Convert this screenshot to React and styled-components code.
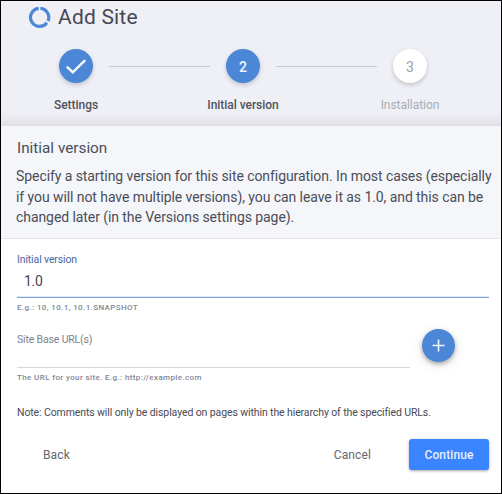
import React from 'react';
import styled, { createGlobalStyle } from 'styled-components';

const GlobalStyle = createGlobalStyle`
  * { box-sizing: border-box; }
  body { margin: 0; background: #fff; font-family: Roboto, "Liberation Sans", sans-serif; }
  button, input { font-family: inherit; border: 0; outline: 0; background: none; padding: 0; margin: 0; }
  p, h1, h2 { margin: 0; font-weight: 400; }
`;

const Dialog = styled.main`
  width: 502px;
  height: 494px;
  border: 1px solid #000;
  background: #fff;
  color: #4b4d59;
  overflow: hidden;
`;

const Header = styled.header`
  height: 125px;
  padding-left: 27px;
  background: linear-gradient(to bottom, #eff0f6 0, #eff0f6 112px, #e9e9ef 118px, #dfdee4 125px);
`;

const TitleRow = styled.div`
  display: flex;
  align-items: center;
  gap: 7px;
  height: 32px;
`;

const Title = styled.h1`
  font-size: 21px;
  line-height: 30px;
  letter-spacing: 0.2px;
  color: #464854;
`;

const Steps = styled.div`
  display: flex;
  align-items: flex-start;
  gap: 16px;
  padding: 16px 0 0 31px;
`;

const Step = styled.div`
  display: flex;
  flex-direction: column;
  align-items: center;
  width: 34px;
`;

const StepCircle = styled.div`
  display: flex;
  align-items: center;
  justify-content: center;
  width: 34px;
  height: 34px;
  border-radius: 50%;
  font-size: 14px;
  font-weight: ${(p) => (p.$active ? 500 : 400)};
  line-height: 18px;
  padding-top: 1px;
  background: ${(p) => (p.$active ? '#4b87d6' : '#fff')};
  color: ${(p) => (p.$active ? '#f3f6fc' : '#98a1ad')};
  box-shadow: 0 2px 4px rgba(60, 60, 80, 0.25);
`;

const StepLabel = styled.span`
  margin-top: 14px;
  font-size: 12px;
  line-height: 16px;
  letter-spacing: -0.04px;
  white-space: nowrap;
  font-weight: ${(p) => (p.$active ? 500 : 400)};
  color: ${(p) => (p.$active ? '#50525c' : '#a7adb8')};
`;

const Connector = styled.div`
  width: 101px;
  height: 1px;
  margin-top: 17px;
  background: #c9cad0;
`;

const Intro = styled.section`
  height: 113px;
  padding: 13px 0 0 15px;
  background: #f4f6fa;
  border-bottom: 1px solid #e4e5e9;
`;

const IntroTitle = styled.h2`
  padding-left: 1px;
  font-size: 15.3px;
  line-height: 18px;
  color: #4b4d59;
`;

const IntroText = styled.p`
  margin-top: 9px;
  font-size: 14px;
  line-height: 20.5px;
  letter-spacing: -0.073px;
  white-space: nowrap;
`;

const Form = styled.section`
  padding: 14px 12px 0 16px;
`;

const Field = styled.label`
  display: block;
  width: ${(p) => p.$width}px;
`;

const FieldLabel = styled.span`
  display: block;
  font-size: 10.5px;
  line-height: 14px;
  letter-spacing: ${(p) => (p.$focused ? '-0.13px' : '-0.16px')};
  color: ${(p) => (p.$focused ? '#4a66a0' : '#7c7f8e')};
`;

const Input = styled.input`
  display: block;
  width: 100%;
  height: ${(p) => p.$height}px;
  padding: 0 7px 2px;
  font-size: 14px;
  letter-spacing: -0.3px;
  color: #42444e;
  border-bottom: 1px solid ${(p) => (p.$focused ? '#7fa2e0' : '#d6d7da')};
  box-shadow: ${(p) => (p.$focused ? 'inset 0 -1px 0 #dfe8f8' : 'none')};
`;

const Hint = styled.span`
  display: block;
  margin-top: 4px;
  font-size: 8px;
  font-weight: 500;
  line-height: 12px;
  letter-spacing: 0.38px;
  white-space: nowrap;
  color: #838694;
`;

const UrlRow = styled.div`
  display: flex;
  gap: 12px;
  margin-top: 19px;
`;

const AddButton = styled.button`
  display: flex;
  align-items: center;
  justify-content: center;
  width: 33px;
  height: 33px;
  margin-top: -4px;
  border-radius: 50%;
  background: #4b87d6;
  box-shadow: 0 2px 4px rgba(0, 0, 0, 0.28), 0 3px 12px rgba(0, 0, 0, 0.12);
`;

const Note = styled.p`
  margin-top: 22px;
  font-size: 10.5px;
  line-height: 14px;
  letter-spacing: -0.108px;
  white-space: nowrap;
  color: #484a54;
`;

const Actions = styled.footer`
  display: flex;
  align-items: center;
  margin-top: 19px;
  padding-left: 26px;
`;

const TextButton = styled.button`
  font-size: 12px;
  line-height: 16px;
  letter-spacing: 0.12px;
  color: #65676e;
`;

const CancelButton = styled(TextButton)`
  margin-left: auto;
  margin-right: 38px;
`;

const PrimaryButton = styled.button`
  width: 80px;
  height: 31px;
  border-radius: 3px;
  font-size: 12px;
  font-weight: 500;
  letter-spacing: 0.1px;
  color: #e6effd;
  background: #3a84ff;
  box-shadow: 0 1px 3px rgba(0, 0, 0, 0.35);
`;

function Logo() {
  return (
    <svg width="23" height="23" viewBox="0 0 23 23" fill="none" stroke="#4b87d6" strokeWidth="3.2">
      <path d="M12.4 2.3A9.1 9.1 0 0 1 20 15" />
      <path d="M18.9 16.8A9.1 9.1 0 1 1 10.7 2.3" />
    </svg>
  );
}

function CheckIcon() {
  return (
    <svg width="22" height="18" viewBox="0 0 22 18" fill="none" stroke="#f4f7fd" strokeWidth="2.5">
      <path d="M1.8 8.6L7.8 14.3L20.2 2.2" />
    </svg>
  );
}

function PlusIcon() {
  return (
    <svg width="13" height="13" viewBox="0 0 13 13" fill="none" stroke="#f4f7fd" strokeWidth="1.6">
      <path d="M6.5 0.5V12.5M0.5 6.5H12.5" />
    </svg>
  );
}

export default function App() {
  return (
    <Dialog>
      <GlobalStyle />
      <Header>
        <TitleRow>
          <Logo />
          <Title>Add Site</Title>
        </TitleRow>
        <Steps>
          <Step>
            <StepCircle $active><CheckIcon /></StepCircle>
            <StepLabel $active>Settings</StepLabel>
          </Step>
          <Connector />
          <Step>
            <StepCircle $active>2</StepCircle>
            <StepLabel $active>Initial version</StepLabel>
          </Step>
          <Connector />
          <Step>
            <StepCircle>3</StepCircle>
            <StepLabel>Installation</StepLabel>
          </Step>
        </Steps>
      </Header>
      <Intro>
        <IntroTitle>Initial version</IntroTitle>
        <IntroText>
          Specify a starting version for this site configuration. In most cases (especially
          <br />
          if you will not have multiple versions), you can leave it as 1.0, and this can be
          <br />
          changed later (in the Versions settings page).
        </IntroText>
      </Intro>
      <Form>
        <Field $width={472}>
          <FieldLabel $focused>Initial version</FieldLabel>
          <Input $focused $height={31} defaultValue="1.0" />
          <Hint>E.g.: 10, 10.1, 10.1.SNAPSHOT</Hint>
        </Field>
        <UrlRow>
          <Field $width={393}>
            <FieldLabel>Site Base URL(s)</FieldLabel>
            <Input $height={21} />
            <Hint>The URL for your site. E.g.: http://example.com</Hint>
          </Field>
          <AddButton aria-label="Add URL"><PlusIcon /></AddButton>
        </UrlRow>
        <Note>Note: Comments will only be displayed on pages within the hierarchy of the specified URLs.</Note>
        <Actions>
          <TextButton>Back</TextButton>
          <CancelButton>Cancel</CancelButton>
          <PrimaryButton>Continue</PrimaryButton>
        </Actions>
      </Form>
    </Dialog>
  );
}
